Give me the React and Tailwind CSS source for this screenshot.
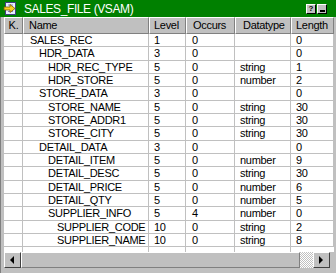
import React from 'react';

const ROWS = [
  ['SALES_REC', 0, '1', '0', '', '0'],
  ['HDR_DATA', 1, '3', '0', '', '0'],
  ['HDR_REC_TYPE', 2, '5', '0', 'string', '1'],
  ['HDR_STORE', 2, '5', '0', 'number', '2'],
  ['STORE_DATA', 1, '3', '0', '', '0'],
  ['STORE_NAME', 2, '5', '0', 'string', '30'],
  ['STORE_ADDR1', 2, '5', '0', 'string', '30'],
  ['STORE_CITY', 2, '5', '0', 'string', '30'],
  ['DETAIL_DATA', 1, '3', '0', '', '0'],
  ['DETAIL_ITEM', 2, '5', '0', 'number', '9'],
  ['DETAIL_DESC', 2, '5', '0', 'string', '30'],
  ['DETAIL_PRICE', 2, '5', '0', 'number', '6'],
  ['DETAIL_QTY', 2, '5', '0', 'number', '5'],
  ['SUPPLIER_INFO', 2, '5', '4', 'number', '0'],
  ['SUPPLIER_CODE', 3, '10', '0', 'string', '2'],
  ['SUPPLIER_NAME', 3, '10', '0', 'string', '8'],
];

const INDENT = ['pl-[7px]', 'pl-[16px]', 'pl-[25px]', 'pl-[34px]'];

const cell = 'h-full border-r border-b border-[#c0c0c0] flex items-center overflow-hidden whitespace-nowrap';

function HeaderCell({ w, children, className = '' }) {
  return (
    <div className={`${w} h-full shrink-0 bg-[#c0c0c0] border-t border-l border-white border-r border-b border-r-[#808080] border-b-[#808080] flex items-center overflow-hidden whitespace-nowrap ${className}`}>
      {children}
    </div>
  );
}

function TitleIcon() {
  return (
    <svg width="16" height="14" viewBox="0 0 16 14">
      <rect x="2.5" y="0.5" width="10" height="12" fill="#e8f0ff" stroke="#404080" />
      <line x1="5" y1="3" x2="10" y2="3" stroke="#8080c0" />
      <line x1="5" y1="9.5" x2="10" y2="9.5" stroke="#8080c0" />
      <path d="M1 5 H7 V2.5 L12 6.5 L7 10.5 V8 H1 Z" fill="#f8d020" stroke="#806000" strokeWidth="0.8" />
    </svg>
  );
}

function Arrow({ dir }) {
  return (
    <svg width="5" height="8" viewBox="0 0 5 8">
      {dir === 'left' ? <path d="M4 0 V8 L0 4 Z" fill="#000" /> : <path d="M0 0 V8 L4 4 Z" fill="#000" />}
    </svg>
  );
}

export default function App() {
  return (
    <div className="w-[336px] h-[273px] bg-[#c0c0c0] flex flex-col overflow-hidden text-[11px] tracking-[-0.3px] text-black" style={{ fontFamily: '"Liberation Sans", Arial, sans-serif' }}>
      {/* title bar */}
      <div className="h-[17px] shrink-0 bg-[#008000] flex items-center pl-[3px] pr-[9px]">
        <TitleIcon />
        <span className="ml-[5px] text-white text-[12px] tracking-[-0.4px]">SALES_FILE (VSAM)</span>
        <div className="ml-auto flex gap-[1px]">
          <div className="w-[10px] h-[10px] bg-[#c0c0c0] border border-t-white border-l-white border-r-black border-b-black flex items-center justify-center text-[8px] leading-none font-bold tracking-normal">?</div>
          <div className="w-[10px] h-[10px] bg-[#c0c0c0] border border-t-white border-l-white border-r-black border-b-black flex items-end justify-center pb-[1px]">
            <div className="w-[5px] h-[2px] bg-black" />
          </div>
        </div>
      </div>

      {/* grid */}
      <div className="flex-1 flex flex-col pl-[3px] pr-[2px] min-h-0 border-l border-[#808080]">
        <div className="h-[17px] shrink-0 flex">
          <HeaderCell w="w-[19px]" className="justify-center">K.</HeaderCell>
          <HeaderCell w="w-[126px]" className="pl-[5px]">Name</HeaderCell>
          <HeaderCell w="w-[37px]" className="pl-[4px]">Level</HeaderCell>
          <HeaderCell w="w-[49px]" className="pl-[6px]">Occurs</HeaderCell>
          <HeaderCell w="w-[56px]" className="pl-[7px]">Datatype</HeaderCell>
          <HeaderCell w="flex-1" className="pl-[4px]">Length</HeaderCell>
        </div>
        <div className="flex-1 bg-white flex flex-col min-h-0">
          {ROWS.map(([name, lvl, level, occurs, type, len]) => (
            <div key={name} className="h-[13.33px] shrink-0 flex">
              <div className={`${cell} w-[19px]`} />
              <div className={`${cell} w-[126px] ${INDENT[lvl]}`}>{name}</div>
              <div className={`${cell} w-[37px] pl-[5px]`}>{level}</div>
              <div className={`${cell} w-[49px] pl-[6px]`}>{occurs}</div>
              <div className={`${cell} w-[56px] pl-[5px]`}>{type}</div>
              <div className={`${cell} flex-1 pl-[5px]`}>{len}</div>
            </div>
          ))}
          <div className="flex-1 flex">
            <div className="w-[19px] border-r border-[#c0c0c0]" />
            <div className="w-[126px] border-r border-[#c0c0c0]" />
            <div className="w-[37px] border-r border-[#c0c0c0]" />
            <div className="w-[49px] border-r border-[#c0c0c0]" />
            <div className="w-[56px] border-r border-[#c0c0c0]" />
            <div className="flex-1" />
          </div>
        </div>

        {/* horizontal scrollbar */}
        <div className="h-[16px] shrink-0 flex mr-[4px]">
          <div className="w-[17px] h-full bg-[#c0c0c0] border border-t-white border-l-white border-r-[#404040] border-b-[#404040] flex items-center justify-center">
            <Arrow dir="left" />
          </div>
          <div className="flex-1 h-full bg-[#c0c0c0] border border-t-white border-l-white border-r-[#808080] border-b-[#808080]" />
          <div className="w-[13px] h-full bg-[repeating-conic-gradient(#ffffff_0_25%,#c0c0c0_0_50%)] bg-[length:2px_2px]" />
          <div className="w-[17px] h-full bg-[#c0c0c0] border border-t-white border-l-white border-r-[#404040] border-b-[#404040] flex items-center justify-center">
            <Arrow dir="right" />
          </div>
        </div>
        <div className="h-[5px] shrink-0" />
      </div>
    </div>
  );
}
